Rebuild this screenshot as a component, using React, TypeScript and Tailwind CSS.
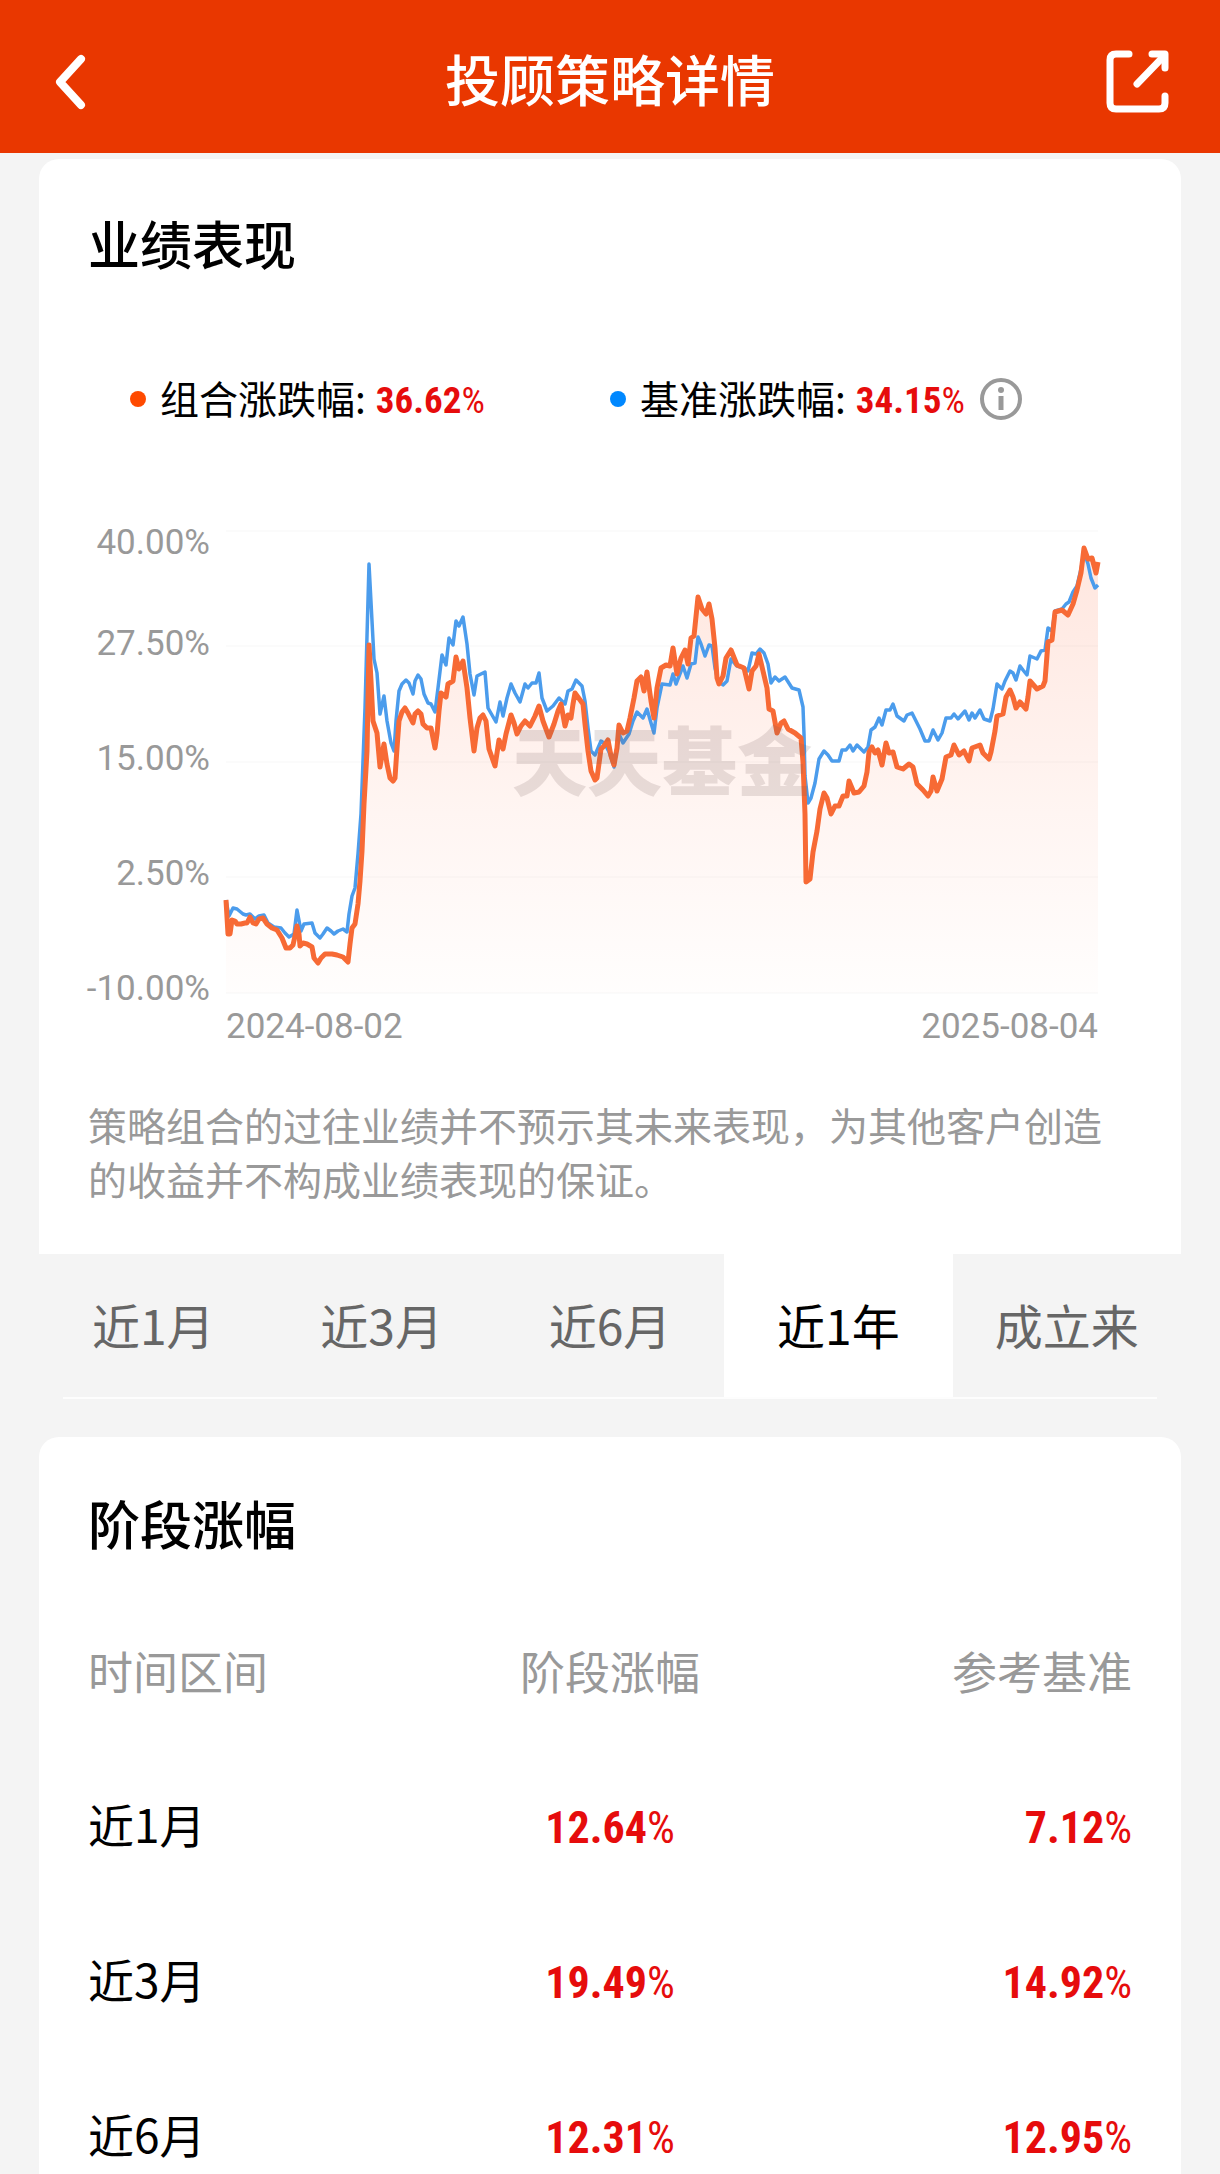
import { useState } from "react";
import type { ReactNode } from "react";

interface ReturnRow {
  label: string;
  value: string;
  benchmark: string;
}

const TABS = ["近1月", "近3月", "近6月", "近1年", "成立来"];

const ROWS: ReturnRow[] = [
  { label: "近1月", value: "12.64", benchmark: "7.12" },
  { label: "近3月", value: "19.49", benchmark: "14.92" },
  { label: "近6月", value: "12.31", benchmark: "12.95" },
];

const GRID_LINES = [0, 115, 231, 346, 462];

const PORTFOLIO =
  "0,369 2,403 4,403 6,389 9,390 11,393 15,393 19,392 21,392 24,386 27,392 30,393 33,388 37,387 41,393 46,397 51,399 56,407 60,417 64,417 67,414 69,405 71,395 73,403 74,415 77,412 81,413 86,416 88,427 92,432 95,427 99,423 106,423 111,424 117,426 122,431 124,413 126,397 129,393 132,373 134,350 136,320 138,273 141,220 143,114 145,150 147,190 151,202 154,236 158,213 161,233 164,247 167,250 169,247 171,217 173,190 176,181 179,177 182,182 187,192 189,183 192,180 195,183 197,193 201,197 205,197 209,217 211,203 213,180 215,162 220,166 222,153 227,150 230,126 233,138 237,130 241,157 244,187 248,220 251,197 254,187 257,184 260,190 263,218 269,235 273,209 277,218 280,203 285,184 288,192 291,203 295,195 299,190 304,195 309,185 313,175 317,190 323,206 328,193 332,180 335,173 339,195 342,184 345,187 347,173 349,162 357,173 359,193 362,220 365,240 369,249 371,247 375,218 378,215 382,209 385,225 388,234 391,217 393,194 397,202 401,200 404,187 408,167 411,150 415,146 418,160 421,141 425,170 428,187 431,157 435,137 440,134 444,135 447,117 451,143 455,127 459,119 462,133 465,107 468,105 472,66 476,78 480,83 483,73 486,88 489,117 491,147 493,153 497,145 500,127 505,119 511,134 518,137 523,158 526,140 530,135 533,123 537,140 541,157 543,178 547,180 551,202 555,192 558,190 562,198 569,202 575,207 577,231 579,283 580,351 584,348 587,321 591,300 594,278 598,262 601,267 605,283 609,275 613,275 617,265 621,265 623,250 628,262 633,261 638,255 641,241 643,221 646,216 649,222 652,219 656,234 660,212 663,222 667,221 671,236 677,238 683,233 687,236 691,253 697,259 702,265 705,260 707,246 711,260 716,248 720,226 725,224 728,214 733,224 738,220 743,230 746,217 754,214 757,222 763,228 765,221 769,200 771,185 777,183 780,166 784,159 787,166 790,177 794,171 800,178 802,166 804,150 811,158 817,155 819,150 822,111 826,109 829,81 836,79 842,84 847,73 851,59 855,42 858,17 862,28 866,27 870,42 872,31";

const BENCHMARK =
  "0,369 3,385 7,377 11,378 17,383 20,384 24,383 29,388 33,385 38,384 42,392 48,396 55,397 59,402 63,406 68,403 71,379 75,400 78,393 86,392 89,402 94,407 97,403 101,397 105,400 108,403 112,400 117,398 121,401 123,383 126,365 129,357 132,323 135,283 139,177 143,33 146,90 148,128 151,142 154,183 158,165 161,190 165,212 168,220 170,190 173,160 176,153 180,149 183,152 187,163 189,150 192,144 195,148 198,163 202,172 205,173 209,181 212,157 216,124 220,134 223,107 227,114 230,90 233,95 237,86 241,113 244,143 248,164 251,145 259,141 262,177 270,191 274,171 277,185 281,167 285,153 289,162 294,171 299,153 302,157 306,152 310,152 313,142 316,167 321,180 327,175 333,167 339,173 342,160 346,158 350,149 356,155 359,170 362,197 365,220 369,224 375,210 379,213 384,223 388,236 393,203 397,212 403,203 407,190 411,181 417,187 421,178 425,192 428,202 431,177 436,153 444,154 447,143 450,153 457,135 461,147 465,133 469,132 472,106 475,113 479,125 483,114 486,115 489,137 492,150 497,154 501,150 505,128 511,135 518,137 522,140 526,122 530,123 534,118 538,122 542,133 545,152 549,146 553,150 559,146 566,157 573,159 577,176 578,203 579,245 582,272 585,267 589,252 593,228 598,220 602,224 606,230 613,230 616,219 620,219 624,214 627,220 631,214 638,221 642,216 645,199 649,196 653,187 656,194 660,179 664,179 667,173 671,185 678,190 681,184 686,182 689,188 694,198 699,210 703,210 707,199 712,209 716,202 720,187 725,187 728,183 732,188 739,180 743,189 746,182 749,187 754,179 758,188 764,190 767,178 771,153 776,158 779,150 784,140 787,142 790,149 794,135 797,139 801,144 804,125 811,128 815,120 819,119 822,97 826,100 829,80 836,78 840,73 843,71 847,61 851,55 855,38 858,21 862,33 865,47 869,57 872,54";

function Percent({ value }: { value: string }) {
  return (
    <span className="font-['Roboto_Condensed','Roboto',sans-serif] font-bold text-[#e60c0c]">
      {value}
      <span className="font-normal">%</span>
    </span>
  );
}

function LegendItem({ color, label, value, children }: { color: string; label: string; value: string; children?: ReactNode }) {
  return (
    <div className="flex items-center h-14 whitespace-nowrap">
      <span className={`size-4 rounded-full mr-3.5 ${color}`} />
      <span className="pb-1 text-[39px]">{label}:</span>
      <span className="ml-2.5 text-[37px]">
        <Percent value={value} />
      </span>
      {children}
    </div>
  );
}

function TrendChart() {
  return (
    <svg viewBox="0 0 872 462" className="block w-full overflow-visible" role="img" aria-label="业绩走势">
      <defs>
        <linearGradient id="area" x1="0" y1="0" x2="0" y2="1">
          <stop offset="0" stopColor="#ff5a28" stopOpacity="0.15" />
          <stop offset="0.6" stopColor="#ff5a28" stopOpacity="0.06" />
          <stop offset="1" stopColor="#ff5a28" stopOpacity="0.01" />
        </linearGradient>
      </defs>
      {GRID_LINES.map((y) => (
        <line key={y} x1="0" x2="872" y1={y} y2={y} stroke="#fbfbfb" strokeWidth="2" />
      ))}
      <polygon points={`0,462 ${PORTFOLIO} 872,462`} fill="url(#area)" />
      <polyline points={BENCHMARK} fill="none" stroke="#4b9cec" strokeWidth="3.5" strokeLinejoin="round" />
      <polyline points={PORTFOLIO} fill="none" stroke="#f76a35" strokeWidth="5" strokeLinejoin="round" />
      <text
        x="436"
        y="259"
        textAnchor="middle"
        fill="#6e5a58"
        fillOpacity="0.17"
        className="text-[75px] font-black"
      >
        天天基金
      </text>
    </svg>
  );
}

export default function App() {
  const [tab, setTab] = useState("近1年");

  return (
    <div className="h-screen flex flex-col bg-[#f4f4f4] text-black font-['Noto_Sans_CJK_SC',sans-serif]">
      <header className="shrink-0 h-[153px] px-[50px] pt-[10px] flex items-center justify-between bg-[#e93700] text-white">
        <button type="button" aria-label="返回" className="w-16">
          <svg viewBox="0 0 64 64" className="size-16" fill="none" stroke="currentColor" strokeWidth="8" strokeLinecap="round" strokeLinejoin="round">
            <path d="M31 9 L10 32 L31 55" />
          </svg>
        </button>
        <h1 className="pb-[10px] text-[55px] font-medium leading-[80px]">投顾策略详情</h1>
        <button type="button" aria-label="分享" className="w-16">
          <svg viewBox="0 0 64 64" className="size-16" fill="none" stroke="currentColor" strokeWidth="7" strokeLinecap="round" strokeLinejoin="round">
            <path d="M23 4 H10 Q4 4 4 10 V53 Q4 59 10 59 H53 Q59 59 59 53 V46" />
            <path d="M46 4 H59 V18" />
            <path d="M58 6 L31 34" />
          </svg>
        </button>
      </header>

      <main className="flex-1 overflow-y-auto [scrollbar-width:none] px-[39px] pt-1.5">
        <section className="bg-white rounded-t-[20px] px-[49px] pt-12 pb-[49px]">
          <h2 className="text-[52px] font-medium leading-[72px]">业绩表现</h2>

          <div className="mt-[92px] px-[42px] grid grid-cols-2">
            <LegendItem color="bg-[#ff4a00]" label="组合涨跌幅" value="36.62" />
            <LegendItem color="bg-[#0088ff]" label="基准涨跌幅" value="34.15">
              <button type="button" aria-label="说明" className="ml-3.5 text-[#999999]">
                <svg viewBox="0 0 44 44" className="size-11" fill="none" stroke="currentColor">
                  <circle cx="22" cy="22" r="19" strokeWidth="4" />
                  <circle cx="22" cy="13" r="3" fill="currentColor" stroke="none" />
                  <path d="M22 19 V33" strokeWidth="5" />
                </svg>
              </button>
            </LegendItem>
          </div>

          <div className="mt-[96px] flex gap-4 text-[35px] leading-10 text-[#999999] font-['Roboto',sans-serif]">
            <div className="w-[122px] shrink-0 flex flex-col items-end gap-[75px]">
              <span className="-mb-3.5">40.00%</span>
              <span>27.50%</span>
              <span>15.00%</span>
              <span>2.50%</span>
              <span>-10.00%</span>
            </div>
            <div className="flex-1 mr-[34px] pt-2">
              <div className="font-['Noto_Sans_CJK_SC',sans-serif]">
                <TrendChart />
              </div>
              <div className="mt-3.5 flex justify-between">
                <span>2024-08-02</span>
                <span>2025-08-04</span>
              </div>
            </div>
          </div>

          <p className="mt-[50px] text-[39px] leading-[54px] text-[#999999]">
            策略组合的过往业绩并不预示其未来表现，为其他客户创造的收益并不构成业绩表现的保证。
          </p>
        </section>

        <div className="relative">
          <div className="grid grid-cols-5" role="tablist">
            {TABS.map((t) => (
              <button
                key={t}
                type="button"
                role="tab"
                aria-selected={tab === t}
                onClick={() => setTab(t)}
                className={`h-[145px] pb-1.5 text-[48px] ${tab === t ? "bg-white text-black" : "text-[#666666]"}`}
              >
                {t}
              </button>
            ))}
          </div>
          <div className="absolute bottom-0 inset-x-6 h-0.5 bg-[#fdfdfd]" />
        </div>

        <section className="mt-[38px] bg-white rounded-t-[20px] px-[49px] pt-[50px]">
          <h2 className="text-[52px] font-medium leading-[72px]">阶段涨幅</h2>
          <table className="mt-[34px] w-full table-fixed text-[46px]">
            <thead>
              <tr className="h-[155px] text-[45px] text-[#999999]">
                <th className="p-0 font-normal text-left">时间区间</th>
                <th className="p-0 font-normal text-center">阶段涨幅</th>
                <th className="p-0 font-normal text-right">参考基准</th>
              </tr>
            </thead>
            <tbody>
              {ROWS.map((r) => (
                <tr key={r.label} className="h-[155px]">
                  <td className="p-0 pb-1">{r.label}</td>
                  <td className="p-0 text-center text-[44px]"><Percent value={r.value} /></td>
                  <td className="p-0 text-right text-[44px]"><Percent value={r.benchmark} /></td>
                </tr>
              ))}
            </tbody>
          </table>
        </section>
      </main>
    </div>
  );
}
